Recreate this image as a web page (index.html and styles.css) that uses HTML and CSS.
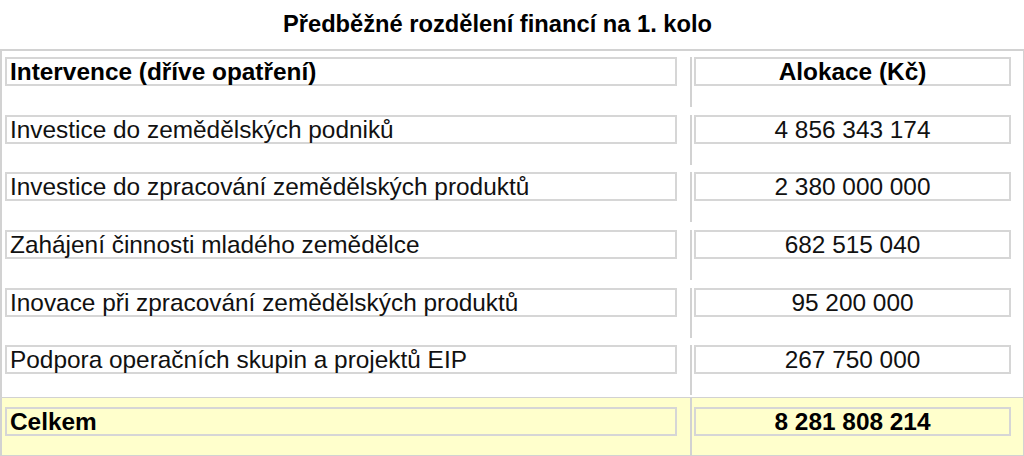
FILE: index.html
```html
<!DOCTYPE html>
<html lang="cs">
<head>
<meta charset="utf-8">
<title>Předběžné rozdělení financí na 1. kolo</title>
<link rel="stylesheet" href="styles.css">
</head>
<body>
<h1 class="title">Předběžné rozdělení financí na 1. kolo</h1>
<div class="table">
  <div class="row head">
    <div class="c1"><div class="box">Intervence (dříve opatření)</div></div>
    <div class="c2"><div class="box num">Alokace (Kč)</div></div>
  </div>
  <div class="row">
    <div class="c1"><div class="box">Investice do zemědělských podniků</div></div>
    <div class="c2"><div class="box num">4 856 343 174</div></div>
  </div>
  <div class="row">
    <div class="c1"><div class="box">Investice do zpracování zemědělských produktů</div></div>
    <div class="c2"><div class="box num">2 380 000 000</div></div>
  </div>
  <div class="row">
    <div class="c1"><div class="box">Zahájení činnosti mladého zemědělce</div></div>
    <div class="c2"><div class="box num">682 515 040</div></div>
  </div>
  <div class="row">
    <div class="c1"><div class="box">Inovace při zpracování zemědělských produktů</div></div>
    <div class="c2"><div class="box num">95 200 000</div></div>
  </div>
  <div class="row">
    <div class="c1"><div class="box">Podpora operačních skupin a projektů EIP</div></div>
    <div class="c2"><div class="box num">267 750 000</div></div>
  </div>
  <div class="row total">
    <div class="c1"><div class="box">Celkem</div></div>
    <div class="c2"><div class="box num">8 281 808 214</div></div>
  </div>
</div>
</body>
</html>
```

FILE: styles.css
```css
html, body {
  margin: 0;
  padding: 0;
  background: #ffffff;
}

body {
  width: 1024px;
  height: 456px;
  overflow: hidden;
  font-family: "Liberation Sans", Arial, sans-serif;
  color: #000000;
}

.title {
  margin: 0;
  height: 49px;
  display: flex;
  align-items: center;
  justify-content: center;
  font-size: 23.7px;
  font-weight: bold;
  padding-right: 29px;
  box-sizing: border-box;
}

.table {
  width: 1024px;
  height: 407px;
  box-sizing: border-box;
  border: 2px solid #d2d2d2;
  border-right-width: 1px;
  border-bottom-width: 1px;
  display: flex;
  flex-direction: column;
}

.row {
  display: flex;
  height: 57.67px;
  flex: none;
}

.c1 {
  width: 688px;
  box-sizing: border-box;
  padding: 6px 13px 0 3px;
}

.c2 {
  width: 333px;
  box-sizing: border-box;
  margin-top: 6px;
  height: 50px;
  border-left: 2px solid #d2d2d2;
  padding: 0 12px 0 2px;
}

.box {
  height: 29px;
  box-sizing: border-box;
  border: 2px solid #d6d6d6;
  padding: 1px 3px 0;
  font-size: 24.4px;
  line-height: 24px;
  white-space: nowrap;
  background: #ffffff;
  color: #111111;
}

.num {
  text-align: center;
}

.head .box {
  font-weight: bold;
  color: #000000;
}

.total {
  flex: 1;
  height: auto;
  background: #ffffcc;
  border-top: 1px solid #d2d2d2;
}

.total .c1 {
  padding-top: 9px;
}

.total .c2 {
  margin-top: 0;
  height: auto;
  padding-top: 9px;
}

.total .box {
  background: #ffffcc;
  font-weight: bold;
  color: #000000;
}
```
